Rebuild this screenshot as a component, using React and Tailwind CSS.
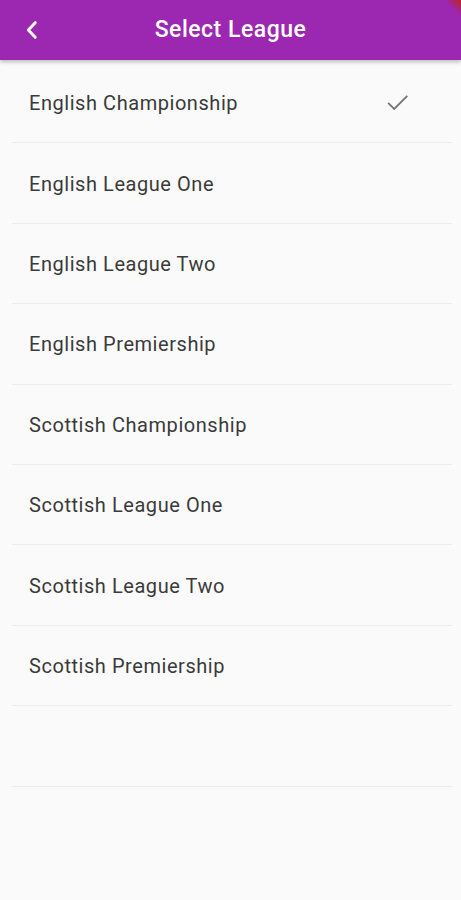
import React from "react";

const leagues = [
  "English Championship",
  "English League One",
  "English League Two",
  "English Premiership",
  "Scottish Championship",
  "Scottish League One",
  "Scottish League Two",
  "Scottish Premiership",
  "",
];

export default function App() {
  return (
    <div className="relative min-h-[900px] w-full overflow-hidden bg-[#fafafa]" style={{ fontFamily: "Roboto, 'Noto Sans', sans-serif" }}>
      <header className="relative z-10 flex h-[60px] items-center bg-[#9c27b0] shadow-[0_2px_4px_rgba(0,0,0,0.25)]">
        <button className="flex h-[60px] w-[60px] items-center justify-center pl-1 text-white">
          <svg width="22" height="22" viewBox="0 0 24 24" fill="none" stroke="white" strokeWidth="3.2" strokeLinecap="round" strokeLinejoin="round">
            <path d="M15.5 4 8 12l7.5 8" />
          </svg>
        </button>
        <h1 className="pointer-events-none absolute left-0 right-0 text-center text-[23px] font-medium tracking-[0.5px] text-white">Select League</h1>
      </header>
      <div className="absolute -right-[26px] top-[-16px] z-20 h-[22px] w-[50px] rotate-45 bg-[#b8262e] blur-[3px]" />
      <ul className="ml-3 mr-[9px] pt-[3px]">
        {leagues.map((name, i) => (
          <li key={i} className="flex h-[80.4px] items-center justify-between border-b border-[#ececec] pl-[17px] pr-[41px] text-[20px] tracking-[0.55px] text-[#3a3a3a]">
            <span className="pt-[1px]">{name}</span>
            {i === 0 && (
              <svg width="26" height="26" viewBox="0 0 24 24" fill="none" stroke="#757575" strokeWidth="1.7" strokeLinecap="square">
                <path d="M3.5 12.5 8.5 17.5 20 6" />
              </svg>
            )}
          </li>
        ))}
      </ul>
    </div>
  );
}
